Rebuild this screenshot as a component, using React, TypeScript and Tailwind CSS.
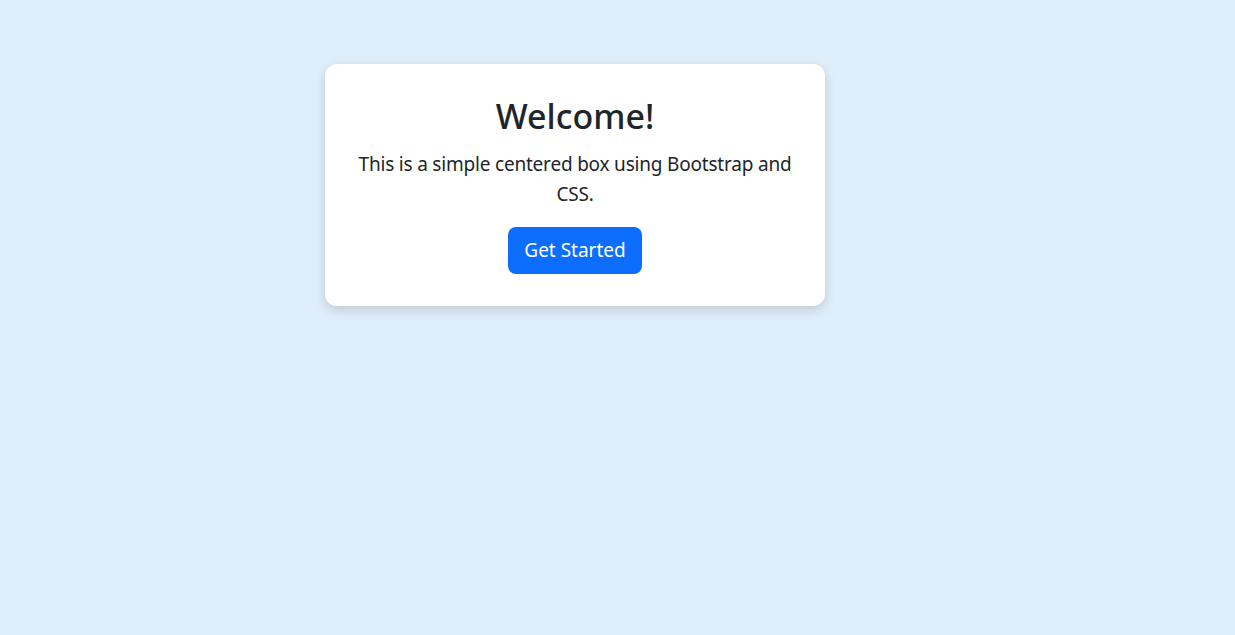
export default function App() {
  return (
    <div
      className="min-h-screen w-full bg-[#dfeefb] pt-16 pl-[325px] text-[#212529]"
      style={{ fontFamily: '"Noto Sans", "Open Sans", sans-serif' }}
    >
      <div className="w-[500px] rounded-xl bg-white px-8 pt-8 pb-8 text-center shadow-[0_4px_12px_rgba(0,0,0,0.15)]">
        <h1 className="text-[34px] font-medium leading-[1.2] mb-3">Welcome!</h1>
        <p className="text-[19px] leading-[30px] tracking-[-0.2px] mb-[18px] -mx-1">
          This is a simple centered box using Bootstrap and CSS.
        </p>
        <button className="rounded-lg bg-[#0d6efd] px-4 py-[8px] text-[19px] leading-[31px] text-white">
          Get Started
        </button>
      </div>
    </div>
  );
}
